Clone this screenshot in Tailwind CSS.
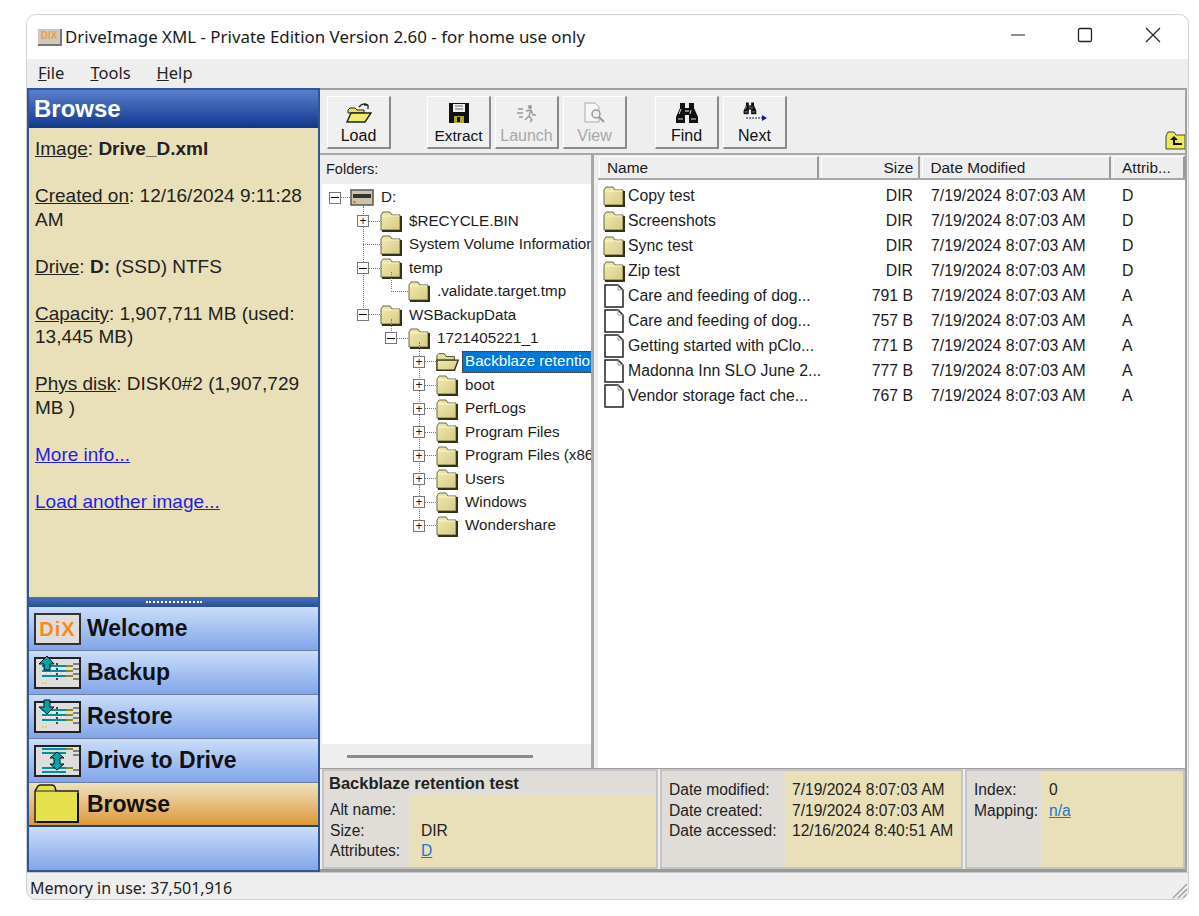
<!DOCTYPE html>
<html lang="en">
<head>
<meta charset="UTF-8">
<title>DriveImage XML</title>
<script src="https://cdn.jsdelivr.net/npm/@tailwindcss/browser@4"></script>
</head>
<body class="bg-white font-['Liberation_Sans',Arial,sans-serif] text-[#111]">
<!-- shared icons -->
<svg class="absolute w-0 h-0" aria-hidden="true">
  <defs>
    <linearGradient id="fg" x1="0" y1="0" x2="1" y2="1"><stop offset="0" stop-color="#f2eab0"/><stop offset="1" stop-color="#d6ca86"/></linearGradient>
  </defs>
  <symbol id="folder" viewBox="0 0 22 22">
    <path d="M1 5 L3 2 H10 L12 5 H20 V20 H1 Z" fill="url(#fg)" stroke="#6a6a4a" stroke-width="1"/>
    <path d="M2 6 H19" stroke="#fff8c8" stroke-width="1"/>
    <path d="M21 6 V21 H2" fill="none" stroke="#33331a" stroke-width="2"/>
  </symbol>
  <symbol id="folderopen" viewBox="0 0 26 22">
    <path d="M1 4 L3 2 H9 L11 5 H20 V9 H1 Z" fill="url(#fg)" stroke="#44442a"/>
    <path d="M1 20 L1 9 H24 L20 20 Z" fill="url(#fg)" stroke="#33331a" stroke-width="1.5"/>
  </symbol>
  <symbol id="file" viewBox="0 0 22 24">
    <path d="M2 1 H15 L20 6 V23 H2 Z" fill="#fff" stroke="#222" stroke-width="1.5"/>
    <path d="M15 1 V6 H20" fill="none" stroke="#999"/>
  </symbol>
  <symbol id="binos" viewBox="0 0 24 22">
    <path d="M5 1 H10 V6 H14 V1 H19 V6 L23 15 V21 H14 V13 H10 V21 H1 V15 L5 6 Z" fill="#111"/>
    <path d="M4 12 L6 7 M15 12 L16 8 M3 17 H8 M16 17 H21" stroke="#ddd" stroke-width="1"/>
    <path d="M10 8 H14 V10 H10 Z" fill="#888"/>
  </symbol>
</svg>

<div class="absolute left-[26px] top-[14px] w-[1163px] h-[886px] border border-[#d0d0d0] rounded-[10px] overflow-hidden flex flex-col bg-[#eeeeee]">
  <!-- title bar -->
  <div class="h-[44px] shrink-0 bg-white flex items-center pl-[11px] relative">
    <div class="w-[24px] h-[17px] bg-[#cfc9bd] border-r-2 border-b-2 border-[#777] flex items-center justify-center text-[10px] leading-none font-bold text-[#e8a050]">DIX</div>
    <span class="ml-[3px] font-['Noto_Sans',sans-serif] text-[16.9px] text-[#1a1a1a] whitespace-nowrap">DriveImage XML - Private Edition Version 2.60 - for home use only</span>
    <div class="ml-auto flex items-center -mt-[4px]">
      <svg class="w-[16px] h-[16px] mr-[51px]" viewBox="0 0 16 16"><path d="M1 8 H15" stroke="#222" stroke-width="1.2"/></svg>
      <svg class="w-[16px] h-[16px] mr-[52px]" viewBox="0 0 16 16"><rect x="1.5" y="1.5" width="13" height="13" rx="1.5" fill="none" stroke="#222" stroke-width="1.3"/></svg>
      <svg class="w-[16px] h-[16px] mr-[27px]" viewBox="0 0 16 16"><path d="M1 1 L15 15 M15 1 L1 15" stroke="#222" stroke-width="1.2"/></svg>
    </div>
  </div>
  <!-- menu -->
  <div class="h-[29px] shrink-0 flex items-center pl-[11px] gap-[26px] font-['Noto_Sans',sans-serif] text-[16.5px] text-[#222]">
    <span><u>F</u>ile</span><span><u>T</u>ools</span><span><u>H</u>elp</span>
  </div>

  <div class="flex-1 min-h-0 flex">
    <!-- sidebar -->
    <aside class="w-[293px] shrink-0 border-2 border-[#2f5597] flex flex-col">
      <div class="h-[38px] shrink-0 bg-gradient-to-b from-[#5a80cc] to-[#0e388c] text-white font-bold text-[24px] flex items-center pl-[5px]">Browse</div>
      <div class="h-[469px] shrink-0 bg-[#e9e0b9] pl-[6px] pr-[4px] pt-[9px] text-[19px] leading-[23.5px] text-[#222]">
        <p><u>Image</u>: <b>Drive_D.xml</b></p>
        <p class="mt-[23.5px]"><u>Created on</u>: 12/16/2024 9:11:28 AM</p>
        <p class="mt-[23.5px]"><u>Drive</u>: <b>D:</b> (SSD) NTFS</p>
        <p class="mt-[23.5px]"><u>Capacity</u>: 1,907,711 MB (used: 13,445 MB)</p>
        <p class="mt-[23.5px]"><u>Phys disk</u>: DISK0#2 (1,907,729 MB )</p>
        <p class="mt-[23.5px] text-[#1f1fe0]"><u>More info...</u></p>
        <p class="mt-[23.5px] text-[#1f1fe0]"><u>Load another image...</u></p>
      </div>
      <div class="h-[10px] shrink-0 bg-gradient-to-b from-[#4a70bb] to-[#254f9a] flex items-center justify-center">
        <div class="w-[56px] h-[2px] border-t-2 border-dotted border-white"></div>
      </div>
      <div class="h-[44px] shrink-0 bg-gradient-to-b from-[#cbdef8] to-[#82a5ea] border-b border-[#6f7f9f] flex items-center pl-[5px] gap-[6px] font-bold text-[23px]">
        <div class="w-[47px] h-[32px] bg-[#dedede] border-2 border-[#333] flex items-center justify-center text-[#f58a1f] text-[20px] tracking-[1px]">DiX</div>
        <span class="-mt-[1px]">Welcome</span>
      </div>
      <div class="h-[44px] shrink-0 bg-gradient-to-b from-[#cbdef8] to-[#82a5ea] border-b border-[#6f7f9f] flex items-center pl-[5px] gap-[6px] font-bold text-[23px]">
        <svg class="w-[47px] h-[34px] shrink-0 overflow-visible" viewBox="0 0 47 32">
          <rect x="1" y="1" width="45" height="30" fill="#dedede" stroke="#222" stroke-width="2"/>
          <path d="M8 9 H32 M8 14 H32 M8 19 H32" stroke="#0090a0" stroke-width="2"/>
          <path d="M8 11 H32 M8 16 H32" stroke="#fff" stroke-width="1" stroke-dasharray="3 2"/>
          <path d="M23 6 V23" stroke="#111" stroke-width="1.5" stroke-dasharray="2 3"/>
          <path d="M32 9 H39 M32 14 H39 M32 19 H39" stroke="#8a8a20" stroke-width="2"/>
          <path d="M39 7 H45 M39 12 H45 M39 17 H45 M39 22 H45" stroke="#222"/>
          <path d="M8 26 H13" stroke="#e8d020" stroke-width="1.5" stroke-dasharray="2 1"/>
          <path d="M13 -1 L20 7 H16 V13 H10 V7 H5 Z" fill="#00a5a5" stroke="#111"/>
        </svg>
        <span>Backup</span>
      </div>
      <div class="h-[44px] shrink-0 bg-gradient-to-b from-[#cbdef8] to-[#82a5ea] border-b border-[#6f7f9f] flex items-center pl-[5px] gap-[6px] font-bold text-[23px]">
        <svg class="w-[47px] h-[34px] shrink-0 overflow-visible" viewBox="0 0 47 32">
          <rect x="1" y="1" width="45" height="30" fill="#dedede" stroke="#222" stroke-width="2"/>
          <path d="M8 9 H32 M8 14 H32 M8 19 H32" stroke="#0090a0" stroke-width="2"/>
          <path d="M8 11 H32 M8 16 H32" stroke="#fff" stroke-width="1" stroke-dasharray="3 2"/>
          <path d="M23 6 V23" stroke="#111" stroke-width="1.5" stroke-dasharray="2 3"/>
          <path d="M32 9 H39 M32 14 H39 M32 19 H39" stroke="#8a8a20" stroke-width="2"/>
          <path d="M39 7 H45 M39 12 H45 M39 17 H45 M39 22 H45" stroke="#222"/>
          <path d="M8 26 H13" stroke="#e8d020" stroke-width="1.5" stroke-dasharray="2 1"/>
          <path d="M13 13 L20 6 H16 V-1 H10 V6 H5 Z" fill="#00a5a5" stroke="#111"/>
        </svg>
        <span>Restore</span>
      </div>
      <div class="h-[44px] shrink-0 bg-gradient-to-b from-[#cbdef8] to-[#82a5ea] border-b border-[#6f7f9f] flex items-center pl-[5px] gap-[6px] font-bold text-[23px]">
        <svg class="w-[47px] h-[32px] shrink-0" viewBox="0 0 47 32">
          <rect x="1" y="1" width="45" height="30" fill="#dedede" stroke="#222" stroke-width="2"/>
          <path d="M8 4 H32 M8 8 H32 M8 23 H32 M8 27 H32" stroke="#0090a0" stroke-width="2"/>
          <path d="M32 4 H39 M32 23 H39" stroke="#8a8a20" stroke-width="2"/>
          <path d="M39 6 H45 M39 10 H45 M39 25 H45" stroke="#222"/>
          <path d="M23 7 L30 13 H26 V19 H30 L23 25 L16 19 H20 V13 H16 Z" fill="#00a5a5" stroke="#111"/>
        </svg>
        <span>Drive to Drive</span>
      </div>
      <div class="h-[44px] shrink-0 bg-gradient-to-b from-[#ece2ba] to-[#dd9830] border-b-2 border-[#21407c] flex items-center pl-[5px] gap-[8px] font-bold text-[23px]">
        <svg class="w-[45px] h-[40px] shrink-0" viewBox="0 0 45 40">
          <path d="M1 7 L4 2 Q5 1 7 1 H18 Q20 1 21 3 L22 7 H44 V38 H1 Z" fill="#e6e04c" stroke="#222" stroke-width="1.5"/>
          <path d="M1 7 H22" stroke="#222"/>
          <path d="M44 9 V38 H3" fill="none" stroke="#111" stroke-width="2"/>
        </svg>
        <span>Browse</span>
      </div>
      <div class="flex-1 bg-gradient-to-b from-[#cbdef8] to-[#82a5ea]"></div>
    </aside>

    <!-- main area -->
    <main class="flex-1 min-w-0 flex flex-col border-t-2 border-r-2 border-[#a0a0a0] mr-px pt-px">
      <!-- toolbar -->
      <div class="h-[62px] shrink-0 relative flex pl-[7px] pt-[5px] text-[16px] leading-none">
        <div class="w-[64px] h-[53px] bg-[#f0f0f0] border border-[#fff] border-r-2 border-b-2 border-r-[#8a8a8a] border-b-[#8a8a8a] flex flex-col items-center pt-[5px]">
          <svg class="w-[26px] h-[22px]" viewBox="0 0 26 22"><path d="M2 8 L4 6 H9 L11 8 H18 V11 H2 Z" fill="#e8e060" stroke="#222"/><path d="M1 20 L5 11 H25 L19 20 Z" fill="#f0ea70" stroke="#222" stroke-width="1.5"/><path d="M13 5 Q17 0 22 3 M22 3 L22 7 M22 3 L18 3" fill="none" stroke="#222" stroke-width="1.3"/></svg>
          <span class="mt-[4px]">Load</span>
        </div>
        <div class="ml-[36px] w-[64px] h-[53px] bg-[#f0f0f0] border border-[#fff] border-r-2 border-b-2 border-r-[#8a8a8a] border-b-[#8a8a8a] flex flex-col items-center pt-[5px]">
          <svg class="w-[22px] h-[22px]" viewBox="0 0 22 22"><rect x="1" y="1" width="20" height="20" fill="#111"/><rect x="5" y="2" width="12" height="8" fill="#f0f0f0"/><path d="M7 4 H15 M7 7 H15" stroke="#666"/><rect x="6" y="14" width="10" height="7" fill="#a8a828"/><rect x="9" y="15" width="3" height="5" fill="#111"/></svg>
          <span class="mt-[4px] text-[15.5px]">Extract</span>
        </div>
        <div class="ml-[4px] w-[64px] h-[53px] bg-[#f0f0f0] border border-[#fff] border-r-2 border-b-2 border-r-[#8a8a8a] border-b-[#8a8a8a] flex flex-col items-center pt-[5px] text-[#a8a8a8]">
          <svg class="w-[22px] h-[22px]" viewBox="0 0 22 22"><circle cx="14" cy="5" r="2" fill="#999"/><path d="M10 9 L15 8 L17 13 L20 13 M15 8 L13 14 L16 18 L14 20 M13 14 L9 18 M2 7 H7 M1 11 H7 M3 15 H7" fill="none" stroke="#999" stroke-width="1.4"/></svg>
          <span class="mt-[4px]">Launch</span>
        </div>
        <div class="ml-[4px] w-[64px] h-[53px] bg-[#f0f0f0] border border-[#fff] border-r-2 border-b-2 border-r-[#8a8a8a] border-b-[#8a8a8a] flex flex-col items-center pt-[5px] text-[#a8a8a8]">
          <svg class="w-[24px] h-[22px]" viewBox="0 0 24 22"><path d="M2 1 H12 L16 5 V20 H2 Z" fill="#f6f6f6" stroke="#aaa"/><circle cx="13" cy="12" r="4" fill="#eee" stroke="#999" stroke-width="1.5"/><path d="M16 15 L21 20" stroke="#999" stroke-width="2"/></svg>
          <span class="mt-[4px]">View</span>
        </div>
        <div class="ml-[28px] w-[64px] h-[53px] bg-[#f0f0f0] border border-[#fff] border-r-2 border-b-2 border-r-[#8a8a8a] border-b-[#8a8a8a] flex flex-col items-center pt-[5px]">
          <svg class="w-[24px] h-[22px]"><use href="#binos"/></svg>
          <span class="mt-[4px]">Find</span>
        </div>
        <div class="ml-[4px] w-[64px] h-[53px] bg-[#f0f0f0] border border-[#fff] border-r-2 border-b-2 border-r-[#8a8a8a] border-b-[#8a8a8a] flex flex-col items-center pt-[5px]">
          <svg class="w-[26px] h-[22px]" viewBox="0 0 26 22"><g transform="translate(1 0) scale(.58)"><use href="#binos" width="24" height="22"/></g><path d="M4 16 H22" stroke="#1a1a90" stroke-width="1.2" stroke-dasharray="2 1"/><path d="M20 13 L25 16 L20 19 Z" fill="#1a1a90"/></svg>
          <span class="mt-[4px]">Next</span>
        </div>
        <svg class="absolute right-0 top-[40px] w-[20px] h-[19px]" viewBox="0 0 20 19"><path d="M1 5 L3 1 H9 L11 4 H20 V18 H1 Z" fill="#f0ea50" stroke="#444"/><path d="M9 5 L5 9 H8 V14 H17 V12 H10 V9 H13 Z" fill="#111"/></svg>
      </div>

      <div class="flex-1 min-h-0 flex border-t-2 border-[#a8a8a8]">
        <!-- folders tree -->
        <div class="w-[269px] ml-[2px] shrink-0 flex flex-col overflow-hidden text-[15.2px] text-[#1c1c1c]">
          <div class="h-[29px] shrink-0 bg-[#eeeeee] flex items-center pl-[4px] text-[14.5px]">Folders:</div>
          <div class="flex-1 bg-white relative pt-[2px] whitespace-nowrap overflow-hidden">
            <!-- vertical tree lines -->
            <div class="absolute left-[41px] top-[22px] h-[106px] border-l border-dotted border-[#777]"></div>
            <div class="absolute left-[69px] top-[88px] h-[17px] border-l border-dotted border-[#777]"></div>
            <div class="absolute left-[69px] top-[135px] h-[12px] border-l border-dotted border-[#777]"></div>
            <div class="absolute left-[97px] top-[158px] h-[182px] border-l border-dotted border-[#777]"></div>

            <div class="flex items-center h-[23.45px] pl-[7px]">
              <span class="w-[12px] h-[12px] border border-[#777] bg-white flex items-center justify-center relative z-10 shrink-0"><i class="w-[8px] h-px bg-black"></i></span>
              <i class="w-[9px] shrink-0 border-t border-dotted border-[#777]"></i>
              <svg class="w-[24px] h-[17px] shrink-0" viewBox="0 0 24 17"><rect x="1" y="1" width="22" height="15" fill="#c9c4a8" stroke="#555" stroke-width="1.5"/><rect x="3" y="5" width="18" height="4" fill="#333"/><rect x="3" y="12" width="3" height="2" fill="#e88020"/></svg>
              <span class="ml-[7px]">D:</span>
            </div>
            <div class="flex items-center h-[23.45px] pl-[35px]">
              <span class="w-[12px] h-[12px] border border-[#777] bg-white flex items-center justify-center relative z-10 shrink-0 text-[12px] leading-none">+</span>
              <i class="w-[11px] shrink-0 border-t border-dotted border-[#777]"></i>
              <svg class="w-[22px] h-[22px] shrink-0"><use href="#folder"/></svg>
              <span class="ml-[7px]">$RECYCLE.BIN</span>
            </div>
            <div class="flex items-center h-[23.45px] pl-[41px]">
              <i class="w-[17px] shrink-0 border-t border-dotted border-[#777]"></i>
              <svg class="w-[22px] h-[22px] shrink-0"><use href="#folder"/></svg>
              <span class="ml-[7px]">System Volume Information</span>
            </div>
            <div class="flex items-center h-[23.45px] pl-[35px]">
              <span class="w-[12px] h-[12px] border border-[#777] bg-white flex items-center justify-center relative z-10 shrink-0"><i class="w-[8px] h-px bg-black"></i></span>
              <i class="w-[11px] shrink-0 border-t border-dotted border-[#777]"></i>
              <svg class="w-[22px] h-[22px] shrink-0"><use href="#folder"/></svg>
              <span class="ml-[7px]">temp</span>
            </div>
            <div class="flex items-center h-[23.45px] pl-[69px]">
              <i class="w-[17px] shrink-0 border-t border-dotted border-[#777]"></i>
              <svg class="w-[22px] h-[22px] shrink-0"><use href="#folder"/></svg>
              <span class="ml-[7px]">.validate.target.tmp</span>
            </div>
            <div class="flex items-center h-[23.45px] pl-[35px]">
              <span class="w-[12px] h-[12px] border border-[#777] bg-white flex items-center justify-center relative z-10 shrink-0"><i class="w-[8px] h-px bg-black"></i></span>
              <i class="w-[11px] shrink-0 border-t border-dotted border-[#777]"></i>
              <svg class="w-[22px] h-[22px] shrink-0"><use href="#folder"/></svg>
              <span class="ml-[7px]">WSBackupData</span>
            </div>
            <div class="flex items-center h-[23.45px] pl-[63px]">
              <span class="w-[12px] h-[12px] border border-[#777] bg-white flex items-center justify-center relative z-10 shrink-0"><i class="w-[8px] h-px bg-black"></i></span>
              <i class="w-[11px] shrink-0 border-t border-dotted border-[#777]"></i>
              <svg class="w-[22px] h-[22px] shrink-0"><use href="#folder"/></svg>
              <span class="ml-[7px]">1721405221_1</span>
            </div>
            <div class="flex items-center h-[23.45px] pl-[91px]">
              <span class="w-[12px] h-[12px] border border-[#777] bg-white flex items-center justify-center relative z-10 shrink-0 text-[12px] leading-none">+</span>
              <i class="w-[11px] shrink-0 border-t border-dotted border-[#777]"></i>
              <svg class="w-[24px] h-[22px] shrink-0"><use href="#folderopen"/></svg>
              <span class="ml-[2px] pl-[2px] pr-[3px] h-[22px] shrink-0 flex items-center bg-[#0078d7] text-white border border-dotted border-[#333]">Backblaze retention test</span>
            </div>
            <div class="flex items-center h-[23.45px] pl-[91px]">
              <span class="w-[12px] h-[12px] border border-[#777] bg-white flex items-center justify-center relative z-10 shrink-0 text-[12px] leading-none">+</span>
              <i class="w-[11px] shrink-0 border-t border-dotted border-[#777]"></i>
              <svg class="w-[22px] h-[22px] shrink-0"><use href="#folder"/></svg>
              <span class="ml-[7px]">boot</span>
            </div>
            <div class="flex items-center h-[23.45px] pl-[91px]">
              <span class="w-[12px] h-[12px] border border-[#777] bg-white flex items-center justify-center relative z-10 shrink-0 text-[12px] leading-none">+</span>
              <i class="w-[11px] shrink-0 border-t border-dotted border-[#777]"></i>
              <svg class="w-[22px] h-[22px] shrink-0"><use href="#folder"/></svg>
              <span class="ml-[7px]">PerfLogs</span>
            </div>
            <div class="flex items-center h-[23.45px] pl-[91px]">
              <span class="w-[12px] h-[12px] border border-[#777] bg-white flex items-center justify-center relative z-10 shrink-0 text-[12px] leading-none">+</span>
              <i class="w-[11px] shrink-0 border-t border-dotted border-[#777]"></i>
              <svg class="w-[22px] h-[22px] shrink-0"><use href="#folder"/></svg>
              <span class="ml-[7px]">Program Files</span>
            </div>
            <div class="flex items-center h-[23.45px] pl-[91px]">
              <span class="w-[12px] h-[12px] border border-[#777] bg-white flex items-center justify-center relative z-10 shrink-0 text-[12px] leading-none">+</span>
              <i class="w-[11px] shrink-0 border-t border-dotted border-[#777]"></i>
              <svg class="w-[22px] h-[22px] shrink-0"><use href="#folder"/></svg>
              <span class="ml-[7px]">Program Files (x86)</span>
            </div>
            <div class="flex items-center h-[23.45px] pl-[91px]">
              <span class="w-[12px] h-[12px] border border-[#777] bg-white flex items-center justify-center relative z-10 shrink-0 text-[12px] leading-none">+</span>
              <i class="w-[11px] shrink-0 border-t border-dotted border-[#777]"></i>
              <svg class="w-[22px] h-[22px] shrink-0"><use href="#folder"/></svg>
              <span class="ml-[7px]">Users</span>
            </div>
            <div class="flex items-center h-[23.45px] pl-[91px]">
              <span class="w-[12px] h-[12px] border border-[#777] bg-white flex items-center justify-center relative z-10 shrink-0 text-[12px] leading-none">+</span>
              <i class="w-[11px] shrink-0 border-t border-dotted border-[#777]"></i>
              <svg class="w-[22px] h-[22px] shrink-0"><use href="#folder"/></svg>
              <span class="ml-[7px]">Windows</span>
            </div>
            <div class="flex items-center h-[23.45px] pl-[91px]">
              <span class="w-[12px] h-[12px] border border-[#777] bg-white flex items-center justify-center relative z-10 shrink-0 text-[12px] leading-none">+</span>
              <i class="w-[11px] shrink-0 border-t border-dotted border-[#777]"></i>
              <svg class="w-[22px] h-[22px] shrink-0"><use href="#folder"/></svg>
              <span class="ml-[7px]">Wondershare</span>
            </div>
          </div>
          <div class="h-[24px] shrink-0 bg-[#eeeeee] flex items-center pl-[25px]">
            <div class="w-[186px] h-[3px] bg-[#8a8a8a]"></div>
          </div>
        </div>
        <div class="w-[7px] shrink-0 bg-[#eeeeee] border-l-[3px] border-[#a8a8a8]"></div>

        <!-- file list -->
        <div class="flex-1 min-w-0 bg-white flex flex-col text-[15.8px] text-[#1c1c1c]">
          <div class="h-[25px] shrink-0 bg-[#eeeeee] flex gap-[2px] pl-[1px] pt-px text-[15.4px] border-b-2 border-[#a8a8a8]">
            <div class="w-[220px] border-t border-l border-white border-r-2 border-r-[#999] flex items-center pl-[7px]">Name</div>
            <div class="w-[100px] border-t border-l border-white border-r-2 border-r-[#999] flex items-center justify-end pr-[5px]">Size</div>
            <div class="w-[189px] border-t border-l border-white border-r-2 border-r-[#999] flex items-center pl-[7px]">Date Modified</div>
            <div class="w-[72px] border-t border-l border-white border-r-2 border-r-[#999] flex items-center pl-[8px] whitespace-nowrap">Attrib...</div>
          </div>
          <div class="pt-[3px] -ml-px">
            <div class="flex items-center h-[25px] pl-[6px]"><svg class="w-[22px] h-[22px] shrink-0"><use href="#folder"/></svg><span class="w-[192px] pl-[3px] whitespace-nowrap">Copy test</span><span class="w-[96px] text-right">DIR</span><span class="w-[209px] pl-[18px] whitespace-nowrap">7/19/2024 8:07:03 AM</span><span>D</span></div>
            <div class="flex items-center h-[25px] pl-[6px]"><svg class="w-[22px] h-[22px] shrink-0"><use href="#folder"/></svg><span class="w-[192px] pl-[3px] whitespace-nowrap">Screenshots</span><span class="w-[96px] text-right">DIR</span><span class="w-[209px] pl-[18px] whitespace-nowrap">7/19/2024 8:07:03 AM</span><span>D</span></div>
            <div class="flex items-center h-[25px] pl-[6px]"><svg class="w-[22px] h-[22px] shrink-0"><use href="#folder"/></svg><span class="w-[192px] pl-[3px] whitespace-nowrap">Sync test</span><span class="w-[96px] text-right">DIR</span><span class="w-[209px] pl-[18px] whitespace-nowrap">7/19/2024 8:07:03 AM</span><span>D</span></div>
            <div class="flex items-center h-[25px] pl-[6px]"><svg class="w-[22px] h-[22px] shrink-0"><use href="#folder"/></svg><span class="w-[192px] pl-[3px] whitespace-nowrap">Zip test</span><span class="w-[96px] text-right">DIR</span><span class="w-[209px] pl-[18px] whitespace-nowrap">7/19/2024 8:07:03 AM</span><span>D</span></div>
            <div class="flex items-center h-[25px] pl-[6px]"><svg class="w-[22px] h-[24px] shrink-0"><use href="#file"/></svg><span class="w-[192px] pl-[3px] whitespace-nowrap">Care and feeding of dog...</span><span class="w-[96px] text-right">791 B</span><span class="w-[209px] pl-[18px] whitespace-nowrap">7/19/2024 8:07:03 AM</span><span>A</span></div>
            <div class="flex items-center h-[25px] pl-[6px]"><svg class="w-[22px] h-[24px] shrink-0"><use href="#file"/></svg><span class="w-[192px] pl-[3px] whitespace-nowrap">Care and feeding of dog...</span><span class="w-[96px] text-right">757 B</span><span class="w-[209px] pl-[18px] whitespace-nowrap">7/19/2024 8:07:03 AM</span><span>A</span></div>
            <div class="flex items-center h-[25px] pl-[6px]"><svg class="w-[22px] h-[24px] shrink-0"><use href="#file"/></svg><span class="w-[192px] pl-[3px] whitespace-nowrap">Getting started with pClo...</span><span class="w-[96px] text-right">771 B</span><span class="w-[209px] pl-[18px] whitespace-nowrap">7/19/2024 8:07:03 AM</span><span>A</span></div>
            <div class="flex items-center h-[25px] pl-[6px]"><svg class="w-[22px] h-[24px] shrink-0"><use href="#file"/></svg><span class="w-[192px] pl-[3px] whitespace-nowrap">Madonna Inn SLO June 2...</span><span class="w-[96px] text-right">777 B</span><span class="w-[209px] pl-[18px] whitespace-nowrap">7/19/2024 8:07:03 AM</span><span>A</span></div>
            <div class="flex items-center h-[25px] pl-[6px]"><svg class="w-[22px] h-[24px] shrink-0"><use href="#file"/></svg><span class="w-[192px] pl-[3px] whitespace-nowrap">Vendor storage fact che...</span><span class="w-[96px] text-right">767 B</span><span class="w-[209px] pl-[18px] whitespace-nowrap">7/19/2024 8:07:03 AM</span><span>A</span></div>
          </div>
        </div>
      </div>

      <!-- details -->
      <div class="h-[104px] shrink-0 flex gap-[2px] pl-[2px] border-t border-[#a0a0a0] border-b-[3px] border-b-[#9a9a9a] text-[15.6px] leading-[20.5px] text-[#222]">
        <div class="w-[336px] border-2 border-[#c4c4c4] bg-[#e0dcd8] flex flex-col">
          <div class="h-[24px] shrink-0 pl-[5px] font-bold text-[16.5px] flex items-center">Backblaze retention test</div>
          <div class="flex-1 flex">
            <div class="w-[85px] pl-[6px] pt-[5px]"><div>Alt name:</div><div>Size:</div><div>Attributes:</div></div>
            <div class="flex-1 bg-[#e9e0b9] pl-[12px] pt-[5px]"><div>&nbsp;</div><div>DIR</div><div class="text-[#1a78d0]"><u>D</u></div></div>
          </div>
        </div>
        <div class="w-[303px] border-2 border-[#c4c4c4] bg-[#e0dcd8] flex">
          <div class="w-[124px] pl-[7px] pt-[9px] whitespace-nowrap"><div>Date modified:</div><div>Date created:</div><div>Date accessed:</div></div>
          <div class="flex-1 bg-[#e9e0b9] pl-[6px] pt-[9px] whitespace-nowrap"><div>7/19/2024 8:07:03 AM</div><div>7/19/2024 8:07:03 AM</div><div>12/16/2024 8:40:51 AM</div></div>
        </div>
        <div class="flex-1 border-2 border-[#c4c4c4] bg-[#e0dcd8] flex">
          <div class="w-[75px] pl-[7px] pt-[9px]"><div>Index:</div><div>Mapping:</div></div>
          <div class="flex-1 bg-[#e9e0b9] pl-[7px] pt-[9px]"><div>0</div><div class="text-[#1a78d0]"><u>n/a</u></div></div>
        </div>
      </div>
    </main>
  </div>

  <!-- status bar -->
  <div class="h-[27px] shrink-0 flex items-center pl-[3px] pt-[3px] border-t border-[#c8c8c8] font-['Noto_Sans',sans-serif] text-[16px] text-[#222] relative">
    Memory in use: 37,501,916
    <svg class="absolute right-0 bottom-0 w-[18px] h-[18px]" viewBox="0 0 18 18"><path d="M17 3 L3 17 M17 8 L8 17 M17 13 L13 17" stroke="#999" stroke-width="1.2"/></svg>
  </div>
</div>
</body>
</html>
